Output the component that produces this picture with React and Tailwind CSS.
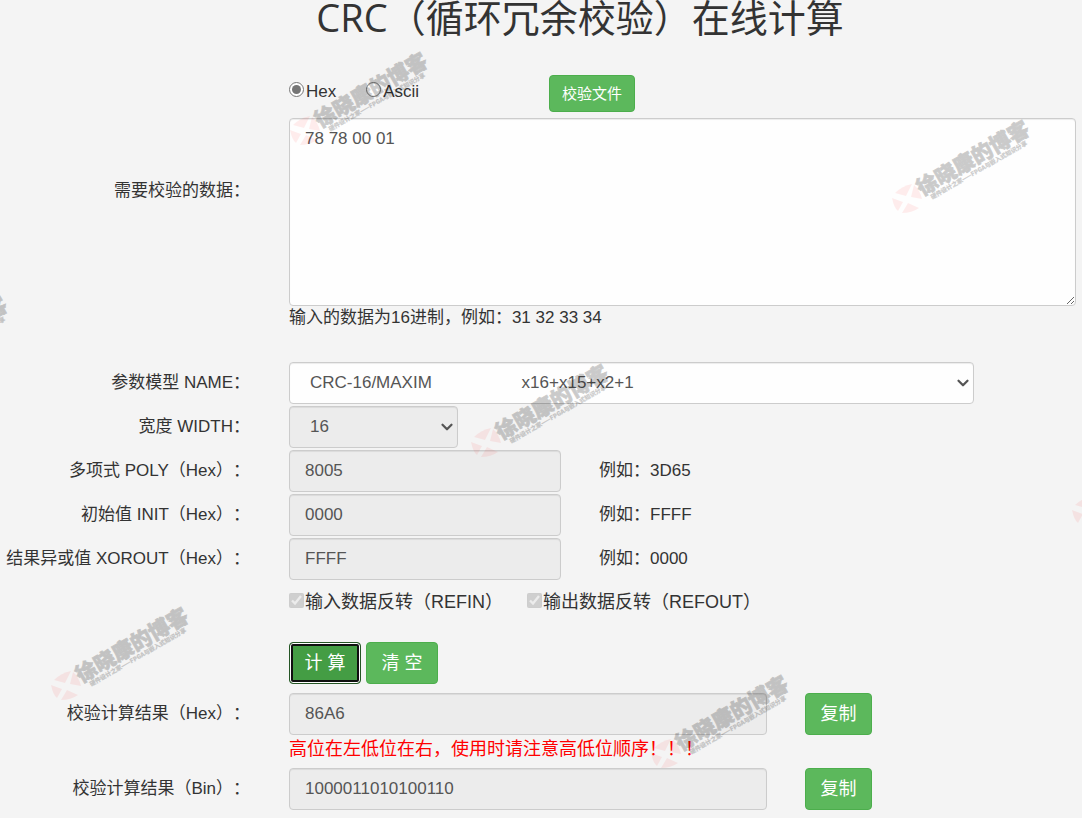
import { useState } from 'react';
import { ChevronDown } from 'lucide-react';

const inputClass = 'h-[42px] rounded border border-[#ccc] bg-[#ececec] px-[15px] text-[17px] text-[#555] opacity-100 shadow-[inset_0_1px_1px_rgba(0,0,0,0.075)] focus:outline-none';
const selectClass = 'h-[42px] w-full appearance-none rounded border border-[#ccc] px-5 text-[17px] text-[#555] opacity-100 shadow-[inset_0_1px_1px_rgba(0,0,0,0.075)] focus:outline-none';
const buttonClass = 'rounded border border-[#4cae4c] bg-[#5cb85c] text-white hover:bg-[#449d44]';

const watermarks = [
  [-115, 374],
  [305, 130],
  [907, 198],
  [486, 442],
  [1087, 510],
  [66, 685],
  [666, 753],
];

function Watermark() {
  return (
    <svg className="pointer-events-none absolute inset-0 h-full w-full" aria-hidden="true">
      {watermarks.map(([x, y]) => (
        <g key={`${x}-${y}`} transform={`translate(${x} ${y})`}>
          <g fill="#ff0000" fillOpacity="0.07">
            <path d="M-15 0 L-4 4 L-9 13 Q-13 10 -15 0 Z" />
            <path d="M-12 -5 Q-5 -12 5 -14 L-1 -2 Z" />
            <path d="M7 -13 Q13 -8 15 1 L4 -1 Z" />
            <path d="M-5 15 L1 5 L12 10 Q5 15 -5 15 Z" />
          </g>
          <g transform="rotate(-30)" opacity="0.2" className="font-['Noto_Sans_CJK_SC',sans-serif]">
            <text x="14" y="6" fontSize="21" fontWeight="900" stroke="#000" strokeWidth="0.8">徐晓康的博客</text>
            <text x="21" y="14" fontSize="6" fontWeight="900" stroke="#000" strokeWidth="0.2">硬件设计之家——FPGA与嵌入式知识分享</text>
          </g>
        </g>
      ))}
    </svg>
  );
}

function Row({ label, htmlFor, children }) {
  return (
    <div className="grid grid-cols-[250px_1fr] items-center gap-x-[39px]">
      <label htmlFor={htmlFor} className="flex justify-end whitespace-nowrap text-[17px]">{label}</label>
      <div className="flex items-center">{children}</div>
    </div>
  );
}

function App() {
  const [mode, setMode] = useState('hex');
  const [data, setData] = useState('78 78 00 01');
  const [result, setResult] = useState({ hex: '86A6', bin: '1000011010100110' });

  const params = [
    { id: 'poly', label: '多项式 POLY（Hex）：', value: '8005', example: '例如：3D65' },
    { id: 'init', label: '初始值 INIT（Hex）：', value: '0000', example: '例如：FFFF' },
    { id: 'xorout', label: '结果异或值 XOROUT（Hex）：', value: 'FFFF', example: '例如：0000' },
  ];

  // bitwise CRC-16/MAXIM, reflected poly 0xA001
  const calculate = () => {
    const bytes = mode === 'hex'
      ? (data.replace(/\s/g, '').match(/.{1,2}/g) || []).map(b => parseInt(b, 16))
      : Array.from(data).map(c => c.charCodeAt(0));
    let crc = 0;
    bytes.forEach(b => {
      crc ^= b;
      for (let i = 0; i < 8; i++) {
        crc = crc & 1 ? (crc >> 1) ^ 0xa001 : crc >> 1;
      }
    });
    crc ^= 0xffff;
    setResult({
      hex: crc.toString(16).toUpperCase().padStart(4, '0'),
      bin: crc.toString(2).padStart(16, '0')
    });
  };

  const handleClear = () => {
    setData('');
    setResult({ hex: '', bin: '' });
  };

  return (
    <div className="relative min-h-screen overflow-hidden bg-[#f4f4f4] pr-1.5 pb-1.5 font-['Liberation_Sans','Noto_Sans_CJK_SC',sans-serif] text-[18px] leading-6 text-[#333] [text-spacing-trim:space-all]">
      <h1 className="pl-[84px] text-center font-['Open_Sans','Noto_Sans_CJK_SC',sans-serif] text-[38px] leading-[34px]">
        CRC（循环冗余校验）在线计算
      </h1>

      <div className="mt-[41px]">
        <Row label="需要校验的数据：" htmlFor="data">
          <div className="w-full">
            <div className="flex items-center">
              <div className="flex w-[260px] gap-[30px] pb-1 text-[17px]">
                <label className="flex items-baseline gap-0.5">
                  <input type="radio" name="mode" checked={mode === 'hex'} onChange={() => setMode('hex')} className="size-[15px] accent-[#767676]" />
                  Hex
                </label>
                <label className="flex items-baseline gap-0.5">
                  <input type="radio" name="mode" checked={mode === 'ascii'} onChange={() => setMode('ascii')} className="size-[15px] accent-[#767676]" />
                  Ascii
                </label>
              </div>
              <button type="button" className={`${buttonClass} h-[37px] px-3 text-[15px]`}>校验文件</button>
            </div>
            <textarea
              id="data"
              value={data}
              onChange={(e) => setData(e.target.value)}
              className="mt-1.5 block h-[188px] w-full rounded border border-[#ccc] bg-[#fefefe] px-[15px] py-2 text-[17px] leading-6 text-[#555] shadow-[inset_0_1px_1px_rgba(0,0,0,0.075)] focus:outline-none"
            />
          </div>
        </Row>
        <p className="pl-[289px] text-[17px]">输入的数据为16进制，例如：31 32 33 34</p>
      </div>

      <div className="mt-8 flex flex-col gap-0.5">
        <Row label="参数模型 NAME：" htmlFor="name">
          <div className="relative w-[87%]">
            <select id="name" className={`${selectClass} bg-[#fefefe]`}>
              <option>{`CRC-16/MAXIM${'\u00a0'.repeat(19)}x16+x15+x2+1`}</option>
            </select>
            <ChevronDown size={18} strokeWidth={3} className="pointer-events-none absolute top-3 right-0.5 text-[#555]" />
          </div>
        </Row>
        <Row label="宽度 WIDTH：" htmlFor="width">
          <div className="relative w-[169px]">
            <select id="width" disabled className={`${selectClass} bg-[#ececec]`}>
              <option>16</option>
            </select>
            <ChevronDown size={18} strokeWidth={3} className="pointer-events-none absolute top-3 right-0.5 text-[#555]" />
          </div>
        </Row>
        {params.map(param => (
          <Row key={param.id} label={param.label} htmlFor={param.id}>
            <input id={param.id} type="text" disabled value={param.value} className={`${inputClass} w-[272px]`} />
            <span className="ml-[38px] text-[17px]">{param.example}</span>
          </Row>
        ))}
        <div className="flex h-10 items-center pl-[289px]">
          <label className="flex w-[238px] items-baseline gap-px">
            <input type="checkbox" disabled checked readOnly className="size-[15px]" />
            输入数据反转（REFIN）
          </label>
          <label className="flex items-baseline gap-px">
            <input type="checkbox" disabled checked readOnly className="size-[15px]" />
            输出数据反转（REFOUT）
          </label>
        </div>
      </div>

      <div className="mt-5 flex gap-[5px] pl-[289px]">
        <button
          type="button"
          onClick={calculate}
          className="h-[42px] w-[72px] rounded border border-[#255625] bg-[#449d44] text-white shadow-[inset_0_0_0_1px_#fff,inset_0_0_0_3px_#101010]"
        >
          计 算
        </button>
        <button type="button" onClick={handleClear} className={`${buttonClass} h-[42px] w-[72px]`}>清 空</button>
      </div>

      <div className="mt-[9px]">
        <Row label="校验计算结果（Hex）：" htmlFor="hex">
          <input id="hex" type="text" disabled value={result.hex} className={`${inputClass} w-[478px]`} />
          <button type="button" onClick={() => navigator.clipboard.writeText(result.hex)} className={`${buttonClass} ml-[38px] h-[42px] w-[67px]`}>复制</button>
        </Row>
        <p className="pt-0.5 pl-[289px] text-[#ff0000]">高位在左低位在右，使用时请注意高低位顺序！！！</p>
      </div>
      <div className="mt-[7px]">
        <Row label="校验计算结果（Bin）：" htmlFor="bin">
          <input id="bin" type="text" disabled value={result.bin} className={`${inputClass} w-[478px]`} />
          <button type="button" onClick={() => navigator.clipboard.writeText(result.bin)} className={`${buttonClass} ml-[38px] h-[42px] w-[67px]`}>复制</button>
        </Row>
      </div>

      <Watermark />
    </div>
  );
}

export default App;
